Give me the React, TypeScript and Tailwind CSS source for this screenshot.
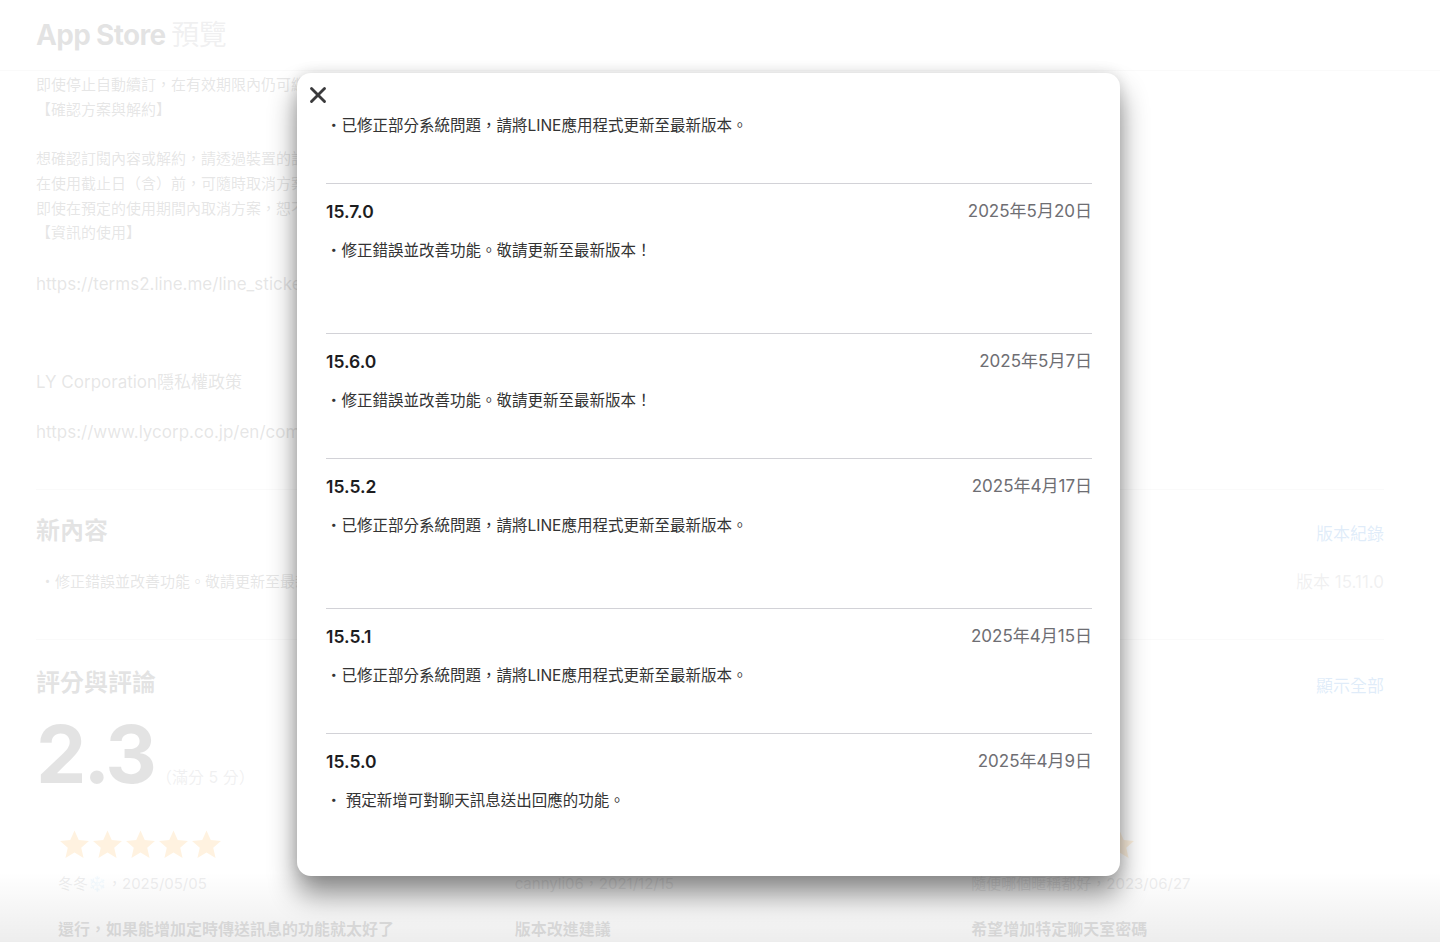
import React from 'react';
import { X } from 'lucide-react';

type Entry = { version?: string; date?: string; note: string; extra?: boolean };

const entries: Entry[] = [
  { note: '・已修正部分系統問題，請將LINE應用程式更新至最新版本。' },
  { version: '15.7.0', date: '2025年5月20日', note: '・修正錯誤並改善功能。敬請更新至最新版本！', extra: true },
  { version: '15.6.0', date: '2025年5月7日', note: '・修正錯誤並改善功能。敬請更新至最新版本！' },
  { version: '15.5.2', date: '2025年4月17日', note: '・已修正部分系統問題，請將LINE應用程式更新至最新版本。', extra: true },
  { version: '15.5.1', date: '2025年4月15日', note: '・已修正部分系統問題，請將LINE應用程式更新至最新版本。' },
  { version: '15.5.0', date: '2025年4月9日', note: '・ 預定新增可對聊天訊息送出回應的功能。' },
];

const reviews = [
  { stars: 5, author: '冬冬❄️，2025/05/05', title: '還行，如果能增加定時傳送訊息的功能就太好了' },
  { stars: 5, author: 'cannyli06，2021/12/15', title: '版本改進建議' },
  { stars: 5, author: '隨便哪個暱稱都好，2023/06/27', title: '希望增加特定聊天室密碼' },
];

const Star = () => (
  <svg width="33" height="33" viewBox="0 0 24 24" fill="#ff9500">
    <path d="M12 1.8l3.1 6.9 7.4.7-5.6 5 1.7 7.4L12 17.9l-6.6 3.9 1.7-7.4-5.6-5 7.4-.7z" />
  </svg>
);

const Background = () => (
  <div className="min-h-[942px] bg-white text-[#1d1d1f]">
    <header className="h-[71px] border-b border-[#d2d2d7] px-9 flex items-center">
      <h1 className="text-[28px] font-bold tracking-tight">
        App Store <span className="font-normal text-[#86868b]">預覽</span>
      </h1>
    </header>

    <div className="pl-9 pr-[56px]">
      <div className="text-[15px] leading-[24.7px] text-[#333] pt-[2px]">
        <p>即使停止自動續訂，在有效期限內仍可繼續使用該方案。</p>
        <p>【確認方案與解約】</p>
        <p>&nbsp;</p>
        <p>想確認訂閱內容或解約，請透過裝置的設定畫面進行。</p>
        <p>在使用截止日（含）前，可隨時取消方案。</p>
        <p>即使在預定的使用期間內取消方案，恕不退還費用。</p>
        <p>【資訊的使用】</p>
        <p>&nbsp;</p>
      </div>
      <p className="text-[17px] leading-[25px] text-[#333] mt-[1px]">https://terms2.line.me/line_stickers_premium_terms</p>
      <p className="text-[17px] leading-[25px] text-[#333] mt-[73px]">LY Corporation隱私權政策</p>
      <p className="text-[17px] leading-[25px] text-[#333] mt-[25px]">https://www.lycorp.co.jp/en/company/privacypolicy/</p>

      <div className="border-t border-[#d2d2d7] mt-[44px]" />

      <div className="flex items-end justify-between mt-[26px]">
        <h2 className="text-[24px] font-bold leading-[30px]">新內容</h2>
        <span className="text-[17px] text-[#0066cc] leading-[24px]">版本紀錄</span>
      </div>
      <div className="flex items-center justify-between mt-[24px] pl-[4px]">
        <p className="text-[15px] text-[#333]">・修正錯誤並改善功能。敬請更新至最新版本！</p>
        <span className="text-[17px] text-[#86868b]">版本 15.11.0</span>
      </div>

      <div className="border-t border-[#d2d2d7] mt-[44px]" />

      <div className="flex items-end justify-between mt-[28px]">
        <h2 className="text-[24px] font-bold leading-[30px]">評分與評論</h2>
        <span className="text-[17px] text-[#0066cc] leading-[24px]">顯示全部</span>
      </div>
      <div className="flex items-baseline gap-0.5 mt-[8px]">
        <span className="text-[80px] font-bold leading-[96px] tracking-[-3px]">2.3</span>
        <span className="text-[16px] text-[#86868b]">（滿分 5 分）</span>
      </div>

      <div className="grid grid-cols-3 gap-[22px] mt-[14px]">
        {reviews.map((r) => (
          <div key={r.title} className="px-[22px] pt-[12px]">
            <div className="flex">
              {Array.from({ length: r.stars }).map((_, i) => (
                <Star key={i} />
              ))}
            </div>
            <p className="text-[15px] text-[#6e6e73] mt-[12px]">{r.author}</p>
            <p className="text-[16px] font-semibold mt-[21px]">{r.title}</p>
          </div>
        ))}
      </div>
    </div>
  </div>
);

const VersionModal = () => (
  <div className="absolute left-[297px] top-[73px] w-[823px] h-[803px] bg-white rounded-[14px] overflow-hidden shadow-[0_18px_28px_rgba(0,0,0,0.45),0_0_14px_rgba(0,0,0,0.12)]">
    <button className="absolute left-[8px] top-[9px] text-[#3a3a3c]">
      <X size={26} strokeWidth={2.6} />
    </button>
    <div className="pl-[29px] pr-[28px] pt-[40px]">
      {entries.map((e, i) => (
        <div key={i} className={`${i > 0 ? 'border-t border-[#d2d2d7] pt-4' : ''} ${e.extra ? 'pb-[70px]' : 'pb-[45px]'}`}>
          {e.version && (
            <div className="flex items-center justify-between h-6">
              <span className="text-[17.5px] font-semibold text-[#1d1d1f]">{e.version}</span>
              <span className="text-[17px] text-[#6e6e73]">{e.date}</span>
            </div>
          )}
          <p className={`text-[15.5px] leading-[25px] text-[#333] ${e.version ? 'mt-[14px]' : ''}`}>{e.note}</p>
        </div>
      ))}
    </div>
  </div>
);

export default function App() {
  return (
    <div className="relative h-[942px] overflow-hidden font-['Inter','Noto_Sans_CJK_TC',sans-serif]">
      <Background />
      {/* dim layer over the page */}
      <div className="absolute inset-0 bg-white/[0.88]" />
      <div className="absolute inset-x-0 bottom-0 h-[70px] bg-gradient-to-b from-transparent to-black/[0.07]" />
      <VersionModal />
    </div>
  );
}
